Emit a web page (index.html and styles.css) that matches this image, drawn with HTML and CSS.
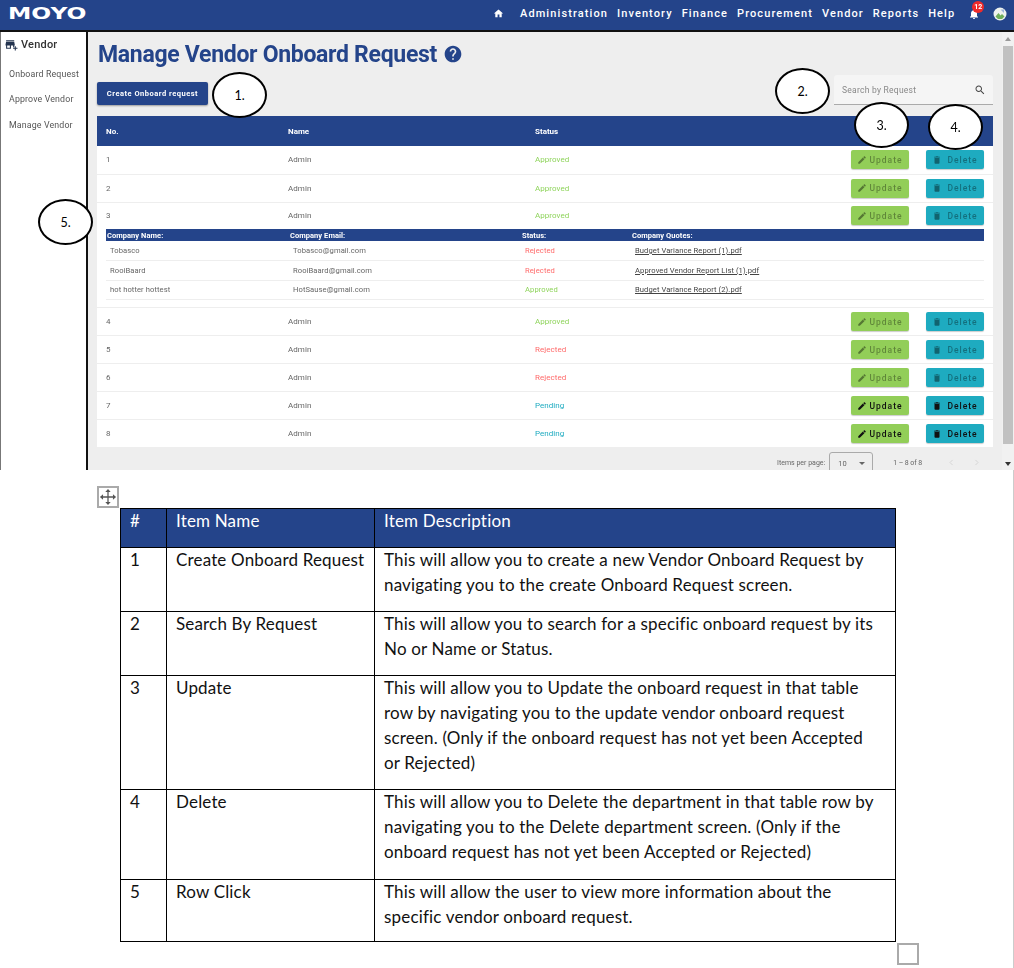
FILE: index.html
```html
<!DOCTYPE html>
<html>
<head>
  <title>Manage Vendor Onboard Request</title>
  <link rel="stylesheet" href="styles.css">
</head>
<body>
  <div class="shot">
    <div class="app">
      <header class="topbar">
        <div class="logo"><span>MOYO</span></div>
        <nav class="nav">
          <svg class="nav-home" viewBox="0 0 24 24"><path d="M10 20v-6h4v6h5v-8h3L12 3 2 12h3v8z"/></svg>
          <a>Administration</a>
          <a>Inventory</a>
          <a>Finance</a>
          <a>Procurement</a>
          <a>Vendor</a>
          <a>Reports</a>
          <a>Help</a>
        </nav>
        <div class="bell">
          <svg viewBox="0 0 24 24"><path d="M12 22c1.1 0 2-.9 2-2h-4c0 1.1.89 2 2 2zm6-6v-5c0-3.07-1.64-5.64-4.5-6.32V4c0-.83-.67-1.5-1.5-1.5s-1.5.67-1.5 1.5v.68C7.63 5.36 6 7.92 6 11v5l-2 2v1h16v-1l-2-2z"/></svg>
          <span class="badge">12</span>
        </div>
        <svg class="avatar" viewBox="0 0 14 14">
          <circle cx="7" cy="7" r="6.5" fill="#eef2ee"/>
          <path d="M2.500 9.500l3-3.500 2 2.500 1.500-1.500 2.500 2.500-2.500 2.500h-4z" fill="#6fae5a"/>
          <path d="M7.500 2.500h3.500v3.500z" fill="#9bb4d8"/>
        </svg>
      </header>

      <div class="workspace">
        <aside class="sidebar">
          <div class="side-title">
            <svg viewBox="0 0 24 24"><path d="M15 17h2v-3h1v-2l-1-5H2l-1 5v2h1v6h9v-6h4v3zm-6 1H4v-4h5v4zM2 4h15v2H2zM20 18v-3h-2v3h-3v2h3v3h2v-3h3v-2z"/></svg>
            Vendor
          </div>
          <a class="side-link">Onboard Request</a>
          <a class="side-link">Approve Vendor</a>
          <a class="side-link">Manage Vendor</a>
        </aside>

        <main class="content">
          <div class="page-title">
            <h1>Manage Vendor Onboard Request</h1>
            <svg viewBox="0 0 24 24"><path d="M12 2C6.48 2 2 6.48 2 12s4.48 10 10 10 10-4.48 10-10S17.52 2 12 2zm1 17h-2v-2h2v2zm2.07-7.75l-.9.92C13.45 12.9 13 13.5 13 15h-2v-.5c0-1.1.45-2.1 1.17-2.83l1.24-1.26c.37-.36.59-.86.59-1.41 0-1.1-.9-2-2-2s-2 .9-2 2H8c0-2.21 1.79-4 4-4s4 1.79 4 4c0 .88-.36 1.68-.93 2.25z"/></svg>
          </div>

          <div class="toolbar">
            <button class="btn-create">Create Onboard request</button>
            <div class="search">
              <span>Search by Request</span>
              <svg viewBox="0 0 24 24"><path d="M15.5 14h-.79l-.28-.27C15.41 12.59 16 11.11 16 9.5 16 5.91 13.09 3 9.5 3S3 5.91 3 9.5 5.91 16 9.5 16c1.61 0 3.09-.59 4.23-1.57l.27.28v.79l5 4.99L20.49 19l-4.99-5zm-6 0C7.01 14 5 11.99 5 9.5S7.01 5 9.5 5 14 7.01 14 9.5 11.99 14 9.5 14z"/></svg>
            </div>
          </div>

          <table class="requests">
            <colgroup><col class="col-no"><col class="col-name"><col class="col-status"><col></colgroup>
            <thead>
              <tr><th>No.</th><th>Name</th><th>Status</th><th></th></tr>
            </thead>
            <tbody>
              <tr>
                <td>1</td><td>Admin</td><td class="approved">Approved</td>
                <td><div class="actions off">
                  <button class="btn-update"><svg viewBox="0 0 24 24"><path d="M3 17.25V21h3.75L17.81 9.94l-3.75-3.75L3 17.25zM20.71 7.04c.39-.39.39-1.02 0-1.41l-2.34-2.34c-.39-.39-1.02-.39-1.41 0l-1.83 1.83 3.75 3.75 1.83-1.83z"/></svg>Update</button>
                  <button class="btn-delete"><svg viewBox="0 0 24 24"><path d="M6 19c0 1.1.9 2 2 2h8c1.1 0 2-.9 2-2V7H6v12zM19 4h-3.5l-1-1h-5l-1 1H5v2h14V4z"/></svg>Delete</button>
                </div></td>
              </tr>
              <tr>
                <td>2</td><td>Admin</td><td class="approved">Approved</td>
                <td><div class="actions off">
                  <button class="btn-update"><svg viewBox="0 0 24 24"><path d="M3 17.25V21h3.75L17.81 9.94l-3.75-3.75L3 17.25zM20.71 7.04c.39-.39.39-1.02 0-1.41l-2.34-2.34c-.39-.39-1.02-.39-1.41 0l-1.83 1.83 3.75 3.75 1.83-1.83z"/></svg>Update</button>
                  <button class="btn-delete"><svg viewBox="0 0 24 24"><path d="M6 19c0 1.1.9 2 2 2h8c1.1 0 2-.9 2-2V7H6v12zM19 4h-3.5l-1-1h-5l-1 1H5v2h14V4z"/></svg>Delete</button>
                </div></td>
              </tr>
              <tr class="open">
                <td>3</td><td>Admin</td><td class="approved">Approved</td>
                <td><div class="actions off">
                  <button class="btn-update"><svg viewBox="0 0 24 24"><path d="M3 17.25V21h3.75L17.81 9.94l-3.75-3.75L3 17.25zM20.71 7.04c.39-.39.39-1.02 0-1.41l-2.34-2.34c-.39-.39-1.02-.39-1.41 0l-1.83 1.83 3.75 3.75 1.83-1.83z"/></svg>Update</button>
                  <button class="btn-delete"><svg viewBox="0 0 24 24"><path d="M6 19c0 1.1.9 2 2 2h8c1.1 0 2-.9 2-2V7H6v12zM19 4h-3.5l-1-1h-5l-1 1H5v2h14V4z"/></svg>Delete</button>
                </div></td>
              </tr>
              <tr class="detail-row">
                <td colspan="4">
                  <table class="companies">
                    <colgroup><col class="c-name"><col class="c-email"><col class="c-status"><col></colgroup>
                    <thead>
                      <tr><th>Company Name:</th><th>Company Email:</th><th>Status:</th><th>Company Quotes:</th></tr>
                    </thead>
                    <tbody>
                      <tr><td>Tobasco</td><td>Tobasco@gmail.com</td><td class="rejected">Rejected</td><td><a>Budget Variance Report (1).pdf</a></td></tr>
                      <tr><td>RooiBaard</td><td>RooiBaard@gmail.com</td><td class="rejected">Rejected</td><td><a>Approved Vendor Report List (1).pdf</a></td></tr>
                      <tr><td>hot hotter hottest</td><td>HotSause@gmail.com</td><td class="approved">Approved</td><td><a>Budget Variance Report (2).pdf</a></td></tr>
                    </tbody>
                  </table>
                </td>
              </tr>
              <tr>
                <td>4</td><td>Admin</td><td class="approved">Approved</td>
                <td><div class="actions off">
                  <button class="btn-update"><svg viewBox="0 0 24 24"><path d="M3 17.25V21h3.75L17.81 9.94l-3.75-3.75L3 17.25zM20.71 7.04c.39-.39.39-1.02 0-1.41l-2.34-2.34c-.39-.39-1.02-.39-1.41 0l-1.83 1.83 3.75 3.75 1.83-1.83z"/></svg>Update</button>
                  <button class="btn-delete"><svg viewBox="0 0 24 24"><path d="M6 19c0 1.1.9 2 2 2h8c1.1 0 2-.9 2-2V7H6v12zM19 4h-3.5l-1-1h-5l-1 1H5v2h14V4z"/></svg>Delete</button>
                </div></td>
              </tr>
              <tr>
                <td>5</td><td>Admin</td><td class="rejected">Rejected</td>
                <td><div class="actions off">
                  <button class="btn-update"><svg viewBox="0 0 24 24"><path d="M3 17.25V21h3.75L17.81 9.94l-3.75-3.75L3 17.25zM20.71 7.04c.39-.39.39-1.02 0-1.41l-2.34-2.34c-.39-.39-1.02-.39-1.41 0l-1.83 1.83 3.75 3.75 1.83-1.83z"/></svg>Update</button>
                  <button class="btn-delete"><svg viewBox="0 0 24 24"><path d="M6 19c0 1.1.9 2 2 2h8c1.1 0 2-.9 2-2V7H6v12zM19 4h-3.5l-1-1h-5l-1 1H5v2h14V4z"/></svg>Delete</button>
                </div></td>
              </tr>
              <tr>
                <td>6</td><td>Admin</td><td class="rejected">Rejected</td>
                <td><div class="actions off">
                  <button class="btn-update"><svg viewBox="0 0 24 24"><path d="M3 17.25V21h3.75L17.81 9.94l-3.75-3.75L3 17.25zM20.71 7.04c.39-.39.39-1.02 0-1.41l-2.34-2.34c-.39-.39-1.02-.39-1.41 0l-1.83 1.83 3.75 3.75 1.83-1.83z"/></svg>Update</button>
                  <button class="btn-delete"><svg viewBox="0 0 24 24"><path d="M6 19c0 1.1.9 2 2 2h8c1.1 0 2-.9 2-2V7H6v12zM19 4h-3.5l-1-1h-5l-1 1H5v2h14V4z"/></svg>Delete</button>
                </div></td>
              </tr>
              <tr>
                <td>7</td><td>Admin</td><td class="pending">Pending</td>
                <td><div class="actions">
                  <button class="btn-update"><svg viewBox="0 0 24 24"><path d="M3 17.25V21h3.75L17.81 9.94l-3.75-3.75L3 17.25zM20.71 7.04c.39-.39.39-1.02 0-1.41l-2.34-2.34c-.39-.39-1.02-.39-1.41 0l-1.83 1.83 3.75 3.75 1.83-1.83z"/></svg>Update</button>
                  <button class="btn-delete"><svg viewBox="0 0 24 24"><path d="M6 19c0 1.1.9 2 2 2h8c1.1 0 2-.9 2-2V7H6v12zM19 4h-3.5l-1-1h-5l-1 1H5v2h14V4z"/></svg>Delete</button>
                </div></td>
              </tr>
              <tr>
                <td>8</td><td>Admin</td><td class="pending">Pending</td>
                <td><div class="actions">
                  <button class="btn-update"><svg viewBox="0 0 24 24"><path d="M3 17.25V21h3.75L17.81 9.94l-3.75-3.75L3 17.25zM20.71 7.04c.39-.39.39-1.02 0-1.41l-2.34-2.34c-.39-.39-1.02-.39-1.41 0l-1.83 1.83 3.75 3.75 1.83-1.83z"/></svg>Update</button>
                  <button class="btn-delete"><svg viewBox="0 0 24 24"><path d="M6 19c0 1.1.9 2 2 2h8c1.1 0 2-.9 2-2V7H6v12zM19 4h-3.5l-1-1h-5l-1 1H5v2h14V4z"/></svg>Delete</button>
                </div></td>
              </tr>
            </tbody>
          </table>

          <div class="pager">
            <span>Items per page:</span>
            <div class="per-page"><span>10</span><i class="caret"></i></div>
            <span class="range">1 – 8 of 8</span>
            <svg class="chev" viewBox="0 0 24 24"><path d="M15 5l-7 7 7 7"/></svg>
            <svg class="chev" viewBox="0 0 24 24"><path d="M9 5l7 7-7 7"/></svg>
          </div>
        </main>

        <div class="scroll">
          <i class="arrow-up"></i>
          <div class="thumb"></div>
          <i class="arrow-down"></i>
        </div>
      </div>
    </div>

    <!-- numbered callouts pasted over the screenshot -->
    <div class="callout c1">1.</div>
    <div class="callout c2">2.</div>
    <div class="callout c3">3.</div>
    <div class="callout c4">4.</div>
    <div class="callout c5">5.</div>
  </div>

  <section class="doc">
    <div class="move-handle">
      <svg viewBox="0 0 20 20"><path d="M10 1l3 3.5h-2.300v4.800h4.800V7l3.500 3-3.500 3v-2.300h-4.800v4.800H13L10 19l-3-3.500h2.300v-4.800H4.500V13L1 10l3.500-3v2.300h4.800V4.500H7z"/></svg>
    </div>
    <table class="items">
      <colgroup><col class="i-num"><col class="i-name"><col></colgroup>
      <thead>
        <tr><th>#</th><th>Item Name</th><th>Item Description</th></tr>
      </thead>
      <tbody>
        <tr class="h64"><td>1</td><td>Create Onboard Request</td><td>This will allow you to create a new Vendor Onboard Request by<br>navigating you to the create Onboard Request screen.</td></tr>
        <tr class="h64"><td>2</td><td>Search By Request</td><td>This will allow you to search for a specific onboard request by its<br>No or Name or Status.</td></tr>
        <tr class="h114"><td>3</td><td>Update</td><td>This will allow you to Update the onboard request in that table<br>row by navigating you to the update vendor onboard request<br>screen. (Only if the onboard request has not yet been Accepted<br>or Rejected)</td></tr>
        <tr class="h90"><td>4</td><td>Delete</td><td>This will allow you to Delete the department in that table row by<br>navigating you to the Delete department screen. (Only if the<br>onboard request has not yet been Accepted or Rejected)</td></tr>
        <tr class="h62"><td>5</td><td>Row Click</td><td>This will allow the user to view more information about the<br>specific vendor onboard request.</td></tr>
      </tbody>
    </table>
    <div class="resize-handle"></div>
  </section>
</body>
</html>
```

FILE: styles.css
```css
* { box-sizing: border-box; }
html, body { margin: 0; padding: 0; }
body { background: #fff; font-family: Roboto, Arial, sans-serif; height: 968px; overflow: hidden; }
button { font-family: inherit; border: none; padding: 0; }

.shot { position: relative; height: 470px; overflow: hidden; }
.app { height: 470px; display: flex; flex-direction: column; filter: blur(0.4px); }

/* top bar */
.topbar { height: 32px; flex: none; background: #24448a; border-bottom: 2px solid #111; display: flex; align-items: center; color: #fff; padding-bottom: 3px; }
.logo { width: 486px; padding-left: 8px; }
.logo span { display: inline-block; font: bold 16.500px "DejaVu Sans", sans-serif; transform: scaleX(1.42); transform-origin: left center; }
.nav { display: flex; align-items: center; gap: 9px; font-size: 11px; font-weight: 500; letter-spacing: 1.100px; }
.nav-home { width: 11px; height: 11px; fill: #fff; margin: 0 7px 0 7px; }
.bell { position: relative; width: 12px; height: 12px; margin-left: 13px; }
.bell svg { width: 12px; height: 12px; fill: #fff; display: block; }
.badge { position: absolute; left: 4px; top: -7px; width: 12px; height: 12px; border-radius: 50%; background: #ee2b2b; font-size: 7px; font-weight: 700; line-height: 12px; text-align: center; letter-spacing: 0; }
.avatar { width: 14px; height: 14px; margin-left: 13px; }

.workspace { flex: 1; display: flex; min-height: 0; }

/* left menu */
.sidebar { width: 88px; flex: none; background: #fff; border-left: 1px solid #777; border-right: 2px solid #111; padding: 6px 0 0 4px; }
.side-title { display: flex; align-items: center; gap: 3px; font-size: 11px; font-weight: 500; color: #333; height: 13px; margin-bottom: 10.500px; letter-spacing: 0.200px; }
.side-title svg { width: 13px; height: 13px; fill: #24344f; }
.side-link { display: block; font-size: 8.800px; color: #555; height: 25.500px; line-height: 25.500px; padding-left: 4px; letter-spacing: 0.150px; }

/* main */
.content { flex: 1; background: #eee; padding: 9px 9px 0 9px; min-width: 0; }
.page-title { display: flex; align-items: center; gap: 6px; height: 26px; padding-left: 1px; }
.page-title h1 { margin: 0; font-size: 23px; font-weight: 700; color: #24448a; letter-spacing: -0.300px; white-space: nowrap; }
.page-title svg { width: 20px; height: 20px; fill: #24448a; }

.toolbar { display: flex; justify-content: space-between; align-items: flex-start; height: 41px; margin-top: 8px; }
.btn-create { width: 111px; height: 23px; margin-top: 7px; background: #24448a; color: #fff; font-size: 7.500px; font-weight: 700; letter-spacing: 0.500px; border-radius: 2px; box-shadow: 0 1px 2px rgba(0,0,0,.35); }
.search { width: 159px; height: 30px; background: #f5f5f5; border-bottom: 1px solid #aaa; display: flex; align-items: center; justify-content: space-between; padding: 0 7px 0 8px; font-size: 8.500px; color: #888; letter-spacing: 0.250px; border-radius: 3px 3px 0 0; }
.search svg { width: 12px; height: 12px; fill: #444; }

/* request table */
table { border-collapse: collapse; }
.requests { width: 896px; table-layout: fixed; background: #fff; }
.col-no { width: 182px; }
.col-name { width: 247px; }
.col-status { width: 230px; }
.requests > thead th { height: 30px; background: #24448a; color: #fff; font-size: 8px; font-weight: 700; text-align: left; padding: 0 0 0 9px; }
.requests > tbody > tr > td { height: 28px; font-size: 8px; color: #666; padding: 0 0 0 9px; border-bottom: 1px solid #eee; letter-spacing: 0.050px; }
.requests > tbody > tr.open > td { border-bottom: none; height: 27px; }
.requests > tbody > tr.detail-row > td { height: 78px; padding: 0 9px 7px 9px; vertical-align: top; }
.approved { color: #8fd45c !important; }
.rejected { color: #ff6b6b !important; }
.pending { color: #1eabc0 !important; }

.actions { display: flex; justify-content: flex-end; gap: 17px; padding-right: 9px; }
.actions button { width: 58px; height: 19px; border-radius: 2px; display: flex; align-items: center; justify-content: center; gap: 2px; font-size: 8.500px; font-weight: 500; letter-spacing: 1px; color: #111; box-shadow: 0 1px 1px rgba(0,0,0,.2); }
.actions svg { width: 10px; height: 10px; fill: #111; }
.actions .btn-update { background: #92ce58; }
.actions .btn-delete { background: #1eabc0; gap: 5px; }
.actions.off button { color: rgba(0,0,0,.35); }
.actions.off svg { fill: rgba(0,0,0,.42); }

/* expanded row */
.companies { width: 878px; table-layout: fixed; }
.c-name { width: 183px; }
.c-email { width: 232px; }
.c-status { width: 110px; }
.companies th { height: 12px; background: #24448a; color: #fff; font-size: 7.500px; font-weight: 700; text-align: left; padding: 0 0 0 1px; }
.companies td { height: 19.600px; font-size: 7.600px; color: #666; padding: 0 0 0 4px; border-bottom: 1px solid #eee; letter-spacing: 0.080px; }
.companies a { color: #444; text-decoration: underline; }

/* paginator */
.pager { height: 23px; display: flex; align-items: flex-start; padding-left: 680px; font-size: 7px; color: #666; }
.pager > span { margin-top: 11px; white-space: nowrap; }
.per-page { width: 44px; height: 30px; margin: 4px 0 0 4px; border: 1px solid #aaa; border-radius: 3px; display: flex; justify-content: space-between; padding: 6px 7px 0 8px; font-size: 7.500px; }
.caret { width: 0; height: 0; margin-top: 3px; border: 3px solid transparent; border-top: 3px solid #666; }
.pager .range { margin-left: 20px; letter-spacing: -0.100px; }
.chev { width: 9px; height: 9px; margin-top: 10px; fill: none; stroke: #ccc; stroke-width: 2; margin-left: 16px; }
.pager .range + .chev { margin-left: 25px; }

/* scroll bar */
.scroll { width: 12px; flex: none; background: #f1f1f1; display: flex; flex-direction: column; align-items: center; padding: 5px 0 0 0; }
.thumb { width: 10px; height: 398px; background: #c1c1c1; margin: 5px 0 18px 0; }
.arrow-up { width: 0; height: 0; border: 3px solid transparent; border-top: none; border-bottom: 4px solid #999; }
.arrow-down { width: 0; height: 0; border: 3px solid transparent; border-bottom: none; border-top: 4px solid #333; }

/* callouts */
.callout { position: absolute; width: 55px; height: 46px; background: #fff; border: 2px solid #000; border-radius: 50%; display: flex; align-items: center; justify-content: center; font: 12.500px Lato, sans-serif; color: #000; }
.c1 { left: 212px; top: 72px; }
.c2 { left: 775px; top: 68px; }
.c3 { left: 854px; top: 102px; }
.c4 { left: 928px; top: 104px; }
.c5 { left: 38px; top: 199px; }

/* word table below */
.doc { position: relative; height: 498px; padding: 38px 0 0 120px; border-right: 1px solid #ccc; }
.items { width: 776px; table-layout: fixed; font-family: Lato, sans-serif; font-size: 17px; letter-spacing: 0.170px; line-height: 25px; color: #111; }
.i-num { width: 46px; }
.i-name { width: 208px; }
.items th, .items td { border: 1px solid #000; padding: 0 0 0 9px; text-align: left; vertical-align: top; font-weight: 400; white-space: nowrap; }
.items th::before, .items td::before { content: ""; display: block; margin-top: -1px; }
.items th { height: 39px; background: #24448a; color: #fff; }
.h64 td { height: 64px; }
.h114 td { height: 114px; }
.h90 td { height: 90px; }
.h62 td { height: 62px; }
.move-handle { position: absolute; left: 97px; top: 16px; width: 22px; height: 22px; border: 2px solid #aaa; background: #fff; }
.move-handle svg { display: block; width: 18px; height: 18px; fill: #555; }
.resize-handle { position: absolute; left: 897px; top: 473px; width: 22px; height: 22px; border: 2px solid #aaa; background: #fff; }
```
